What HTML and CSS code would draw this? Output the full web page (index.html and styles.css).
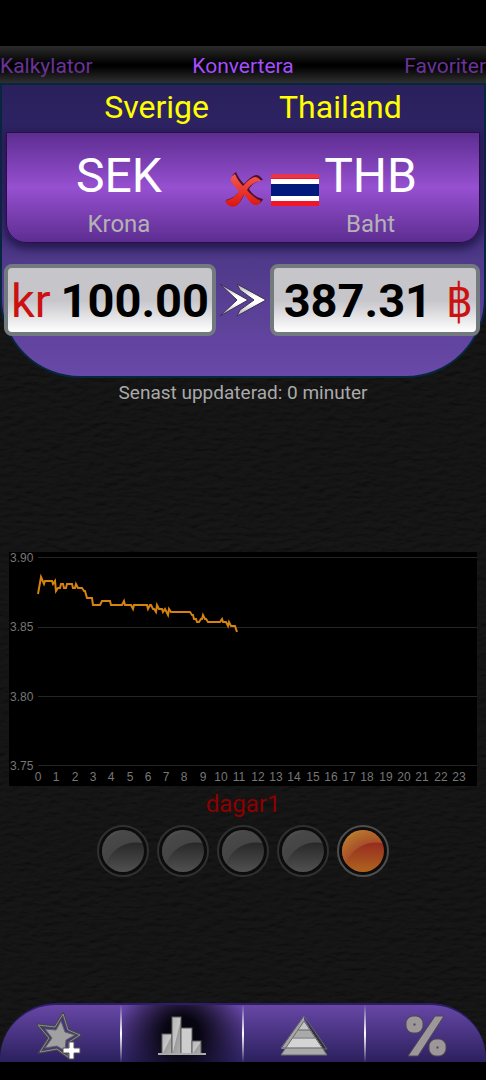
FILE: index.html
```
<!DOCTYPE html>
<html lang="sv">
  <head>
    <meta charset="UTF-8" />
    <meta name="viewport" content="width=device-width, initial-scale=1" />
    <title>Konvertera</title>
    <link rel="stylesheet" href="styles.css">
  </head>
  <body>
    <svg class="leather" aria-hidden="true">
      <filter id="leather" x="0" y="0" width="100%" height="100%">
        <feTurbulence type="fractalNoise" baseFrequency="0.08 0.2" numOctaves="3" seed="4" />
        <feDiffuseLighting lighting-color="#fff" surfaceScale="2">
          <feDistantLight azimuth="250" elevation="50" />
        </feDiffuseLighting>
      </filter>
      <rect width="100%" height="100%" filter="url(#leather)" />
    </svg>

    <div class="statusbar"></div>

    <nav class="tabs">
      <a href="#kalkylator">Kalkylator</a>
      <a href="#konvertera" class="active">Konvertera</a>
      <a href="#favoriter">Favoriter</a>
    </nav>

    <main>
      <section class="panel">
        <div class="countries">
          <span>Sverige</span>
          <span>Thailand</span>
        </div>

        <div class="card">
          <button class="currency">
            <span class="code">SEK</span>
            <span class="name">Krona</span>
          </button>
          <div class="flags">
            <svg width="40" height="36" viewBox="0 0 40 36">
              <defs>
                <linearGradient id="red" x1="0" y1="0" x2="0" y2="1">
                  <stop offset="0" stop-color="#f45a50" />
                  <stop offset="1" stop-color="#dc1410" />
                </linearGradient>
              </defs>
              <path d="M11 1C8 3 6 6 7 9C9 13 12 16 15 19C12 24 8 27 1 29C3 33 7 36 12 34C16 31 17 27 20 23C24 26 26 32 31 33C34 34 37 31 38 28C32 27 27 23 24 18C27 13 32 9 38 9C36 6 34 4 31 4C26 5 22 10 19 13C16 10 13 6 11 1Z" fill="#4a1030" transform="translate(1 -1)" />
              <path d="M11 2C8 4 6 6 7 9C9 13 12 16 15 19C12 24 8 27 1 29C3 33 7 36 12 34C16 31 17 27 20 23C24 26 26 32 31 33C34 34 36 31 37 29C32 27 27 23 23 18C26 13 31 9 37 9C35 6 33 5 31 5C26 6 22 11 19 14C16 11 13 7 11 2Z" fill="url(#red)" />
            </svg>
            <svg width="48" height="32" viewBox="0 0 48 32">
              <rect width="48" height="32" fill="#f31427" />
              <rect width="48" height="4" fill="#ea3548" />
              <rect y="5" width="48" height="22" fill="#fff" />
              <rect y="10" width="48" height="12" fill="#00197d" />
            </svg>
          </div>
          <button class="currency">
            <span class="code">THB</span>
            <span class="name">Baht</span>
          </button>
        </div>

        <div class="amounts">
          <div class="field">
            <label for="from">kr</label>
            <input type="text" id="from" name="from" value="100.00" />
          </div>
          <svg class="arrows" width="46" height="34" viewBox="0 0 46 34">
            <defs>
              <linearGradient id="silver" x1="0" y1="0" x2="0" y2="1">
                <stop offset="0" stop-color="#aaa" />
                <stop offset="0.4" stop-color="#fff" />
                <stop offset="0.6" stop-color="#fff" />
                <stop offset="1" stop-color="#aaa" />
              </linearGradient>
            </defs>
            <g fill="url(#silver)" stroke="#3d3154">
              <path d="M0 1L28 17L0 33L17 17Z" />
              <path d="M17 1L46 17L17 33L20 27L34 17L20 7Z" />
            </g>
          </svg>
          <div class="field to">
            <input type="text" id="to" name="to" value="387.31" />
            <label for="to">฿</label>
          </div>
        </div>
      </section>

      <p class="updated">Senast uppdaterad: 0 minuter</p>

      <svg class="chart" viewBox="0 0 468 234">
        <rect width="468" height="234" />
        <path class="grid" d="M29 5.5H468M29 75.5H468M29 144.5H468M29 213.5H468" />
        <path class="rate" d="M29 42L32 25L35 32L36 29H43L44 32L46 29L47 39L49 36H51L52 32H54L55 36H57L58 32H63L64 36H66L67 32L69 36H73L75 39H76L78 46H83L84 53H91L93 49H101L102 53H113L115 49L116 53H122L124 57L125 53H138L139 57L141 53H142L144 57H145L147 60L148 53L150 57H153L154 60L156 57L159 63L160 57L162 60H181L183 63H184L185 67H187L188 70H190L192 67H193L194 63L196 67H197L199 70H211L213 67L214 70H217L219 74L220 70L222 74H226L228 80" />
        <g class="values">
          <text x="1" y="10">3.90</text>
          <text x="1" y="79">3.85</text>
          <text x="1" y="149">3.80</text>
          <text x="1" y="218">3.75</text>
        </g>
        <g class="hours" id="hours"></g>
      </svg>

      <p class="period">dagar1</p>

      <div class="dots">
        <input type="radio" name="period" aria-label="5 år" />
        <input type="radio" name="period" aria-label="1 år" />
        <input type="radio" name="period" aria-label="1 månad" />
        <input type="radio" name="period" aria-label="1 vecka" />
        <input type="radio" name="period" aria-label="1 dag" checked />
      </div>
    </main>

    <nav class="toolbar">
      <a href="#spara" aria-label="Spara favorit">
        <svg width="46" height="48" viewBox="0 0 46 48">
          <path d="M26 2L31 18L43 23L32 30L31 45L20 37L3 40L12 26L1 13L18 15Z" fill="#47348a" stroke="#45454d" stroke-width="3" />
          <path d="M26 2L31 18L43 23L32 30L31 45L20 37L3 40L12 26L1 13L18 15Z" fill="none" stroke="#8d8d90" />
          <path d="M24 9L28 20L38 23L29 28L28 39L20 34L8 36L15 26L8 17L19 18Z" fill="#a1a1a1" stroke="#606067" />
          <path d="M32 30H37V36H43V41H37V47H32V41H26V36H32Z" fill="#fff" stroke="#555" />
        </svg>
      </a>
      <a href="#diagram" class="active" aria-label="Diagram">
        <svg width="48" height="42" viewBox="0 0 48 42">
          <defs>
            <linearGradient id="bar" x1="0" y1="0" x2="1" y2="1">
              <stop offset="0" stop-color="#b4b4b4" />
              <stop offset="0.5" stop-color="#c6c6c6" />
              <stop offset="0.55" stop-color="#9d9d9d" />
              <stop offset="1" stop-color="#b0b0b0" />
            </linearGradient>
          </defs>
          <g fill="url(#bar)" stroke="#5c5c5c">
            <rect x="4" y="19" width="10" height="20" />
            <rect x="14" y="2" width="9" height="37" />
            <rect x="23" y="13" width="11" height="26" fill="#cdcdcd" />
            <rect x="34" y="26" width="9" height="13" />
          </g>
          <path d="M0 39H48" stroke="#aaa" stroke-width="2" />
        </svg>
      </a>
      <a href="#pyramid" aria-label="Pyramid">
        <svg width="48" height="42" viewBox="0 0 48 42">
          <path d="M24 1L48 36H45L48 41H44Z" fill="#33333c" />
          <path d="M24 1L1 34H6L24 6Z" fill="#a5a5a5" />
          <path d="M24 5L47 40H1Z" fill="#c4c4c4" />
          <path d="M19 15H30L35 22H13Z" fill="#a9a9a9" />
          <path d="M13 23H36L42 32H6Z" fill="#d4d4d4" />
          <path d="M6 33H42L47 40H1Z" fill="#aaa" />
          <path d="M24 1L47 34H43M24 6L1 40H47L24 6ZM18 15H30M13 23H35M1 33H42M24 1L1 33" fill="none" stroke="#66666b" />
        </svg>
      </a>
      <a href="#procent" aria-label="Procent">
        <svg width="42" height="42" viewBox="0 0 42 42">
          <path d="M30 1H39L13 41H3Z" fill="#9d9799" stroke="#4d4650" />
          <g fill="none">
            <rect x="5" y="5" width="9" height="9" rx="3" stroke="#4d4650" stroke-width="9" />
            <rect x="5" y="5" width="9" height="9" rx="3" stroke="#9d9799" stroke-width="7" />
            <rect x="28" y="28" width="9" height="9" rx="3" stroke="#4d4650" stroke-width="9" />
            <rect x="28" y="28" width="9" height="9" rx="3" stroke="#9d9799" stroke-width="7" />
          </g>
        </svg>
      </a>
    </nav>
    <div class="homebar"></div>

    <script>
      const hours = document.getElementById("hours");

      for (let h = 0; h < 24; h++) {
        const text = document.createElementNS("http://www.w3.org/2000/svg", "text");
        text.setAttribute("x", Math.round(29 + h * 18.3));
        text.setAttribute("y", 229);
        text.textContent = h;
        hours.appendChild(text);
      }
    </script>
  </body>
</html>
```
FILE: styles.css
```
* {
  box-sizing: border-box;
}

body {
  margin: 0;
  min-height: 100vh;
  display: flex;
  flex-direction: column;
  position: relative;
  background-color: #030303;
  font-family: Roboto, "Noto Sans", sans-serif;
}

a {
  text-decoration: none;
}

p {
  margin: 0;
  text-align: center;
}

button {
  padding: 0;
  border: none;
  background: none;
  font-family: inherit;
  cursor: pointer;
}

.leather {
  position: absolute;
  top: 0;
  left: 0;
  width: 100%;
  height: 100%;
  z-index: -1;
  opacity: 0.08;
}

.statusbar {
  height: 46px;
  background-color: #000;
}

.homebar {
  height: 18px;
  background-color: #000;
}

.tabs {
  display: flex;
  height: 37px;
  line-height: 40px;
  font-size: 21px;
  background: linear-gradient(#2b2b2b, #000 50%, #000 55%, #303030);
}

.tabs a {
  flex: 1;
  color: #693399;
}

.tabs .active {
  text-align: center;
  color: #a64dff;
}

.tabs a:last-child {
  text-align: right;
}

main {
  flex: 1;
}

.panel {
  height: 295px;
  border: 2px solid #07273f;
  border-radius: 0 0 80px 80px;
  background: linear-gradient(#2a205c, #35296f 40%, #4f3989 60%, #6949a8);
}

.countries {
  display: flex;
  justify-content: center;
  gap: 70px;
  padding-left: 20px;
  height: 47px;
  line-height: 44px;
  font-size: 32px;
  color: #ffff00;
}

.card {
  display: flex;
  height: 111px;
  margin: 0 4px;
  padding: 0 62px 0 69px;
  border: 1px solid #2b0d4b;
  border-radius: 0 0 20px 20px;
  background: linear-gradient(#5d2d91, #9650d0 50%, #5d2d91);
  box-shadow: 0 3px 8px 3px #241a50;
}

.currency {
  display: flex;
  flex-direction: column;
  align-items: center;
}

.code {
  height: 76px;
  line-height: 86px;
  font-size: 48px;
  color: #fff;
}

.name {
  line-height: 30px;
  font-size: 24px;
  color: #b3b3b3;
}

.flags {
  display: flex;
  gap: 7px;
  align-items: center;
  height: 114px;
  margin-left: auto;
  margin-right: 5px;
}

.amounts {
  display: flex;
  align-items: center;
  justify-content: space-between;
  margin-top: 21px;
  padding: 0 4px 0 2px;
}

.field {
  display: flex;
  align-items: center;
  width: 212px;
  height: 72px;
  padding: 0 3px;
  border: 4px solid #737a7f;
  border-radius: 8px;
  background: linear-gradient(#c5c5ca, #c5c5ca 50%, #fff);
}

.field label {
  font-size: 47px;
  color: #cc1111;
}

.field input {
  flex: 1;
  min-width: 0;
  padding: 0;
  border: none;
  background: none;
  font-family: inherit;
  font-size: 47px;
  font-weight: bold;
  text-align: right;
  color: #000;
}

.field.to {
  gap: 14px;
  width: 210px;
}

.to label {
  font-family: "DejaVu Sans Condensed", "Noto Sans", sans-serif;
}

.updated {
  line-height: 30px;
  font-size: 19px;
  color: #aaa;
}

.chart {
  display: block;
  width: calc(100% - 18px);
  margin: 144px 9px 0;
  font-family: "Liberation Sans", sans-serif;
  font-size: 12px;
}

.chart text {
  fill: #777;
}

.grid {
  stroke: #262626;
}

.rate {
  fill: none;
  stroke: #d6820f;
  stroke-width: 2;
}

.hours {
  text-anchor: middle;
}

.period {
  line-height: 36px;
  font-size: 24px;
  color: #8b0000;
}

.dots {
  display: flex;
  justify-content: center;
  gap: 8px;
}

.dots input {
  appearance: none;
  width: 52px;
  height: 52px;
  margin: 3px 0 0;
  padding: 3px;
  border: 2px solid #303030;
  border-radius: 50%;
  background:
    radial-gradient(circle at 34px 44px, #0000 31px, #454545 32px, #484848 44px, #686868 56px) content-box,
    linear-gradient(#282828 30%, #505050) content-box,
    #0c0c0c;
  cursor: pointer;
}

.dots input:checked {
  border-color: #4d4d4d;
  background:
    radial-gradient(circle at 34px 44px, #0000 31px, #a8502a 32px, #b56f2c 44px, #c8a850 56px) content-box,
    linear-gradient(#962c20 30%, #b0641e) content-box,
    #0c0c0c;
}

.toolbar {
  display: flex;
  height: 59px;
  overflow: hidden;
  border-top: 2px solid #2b1d66;
  border-radius: 56px 56px 0 0;
  background: linear-gradient(#6747a6, #2b205e);
}

.toolbar a {
  flex: 1;
  display: flex;
  align-items: center;
  justify-content: center;
  padding-top: 4px;
}

.toolbar a + a {
  border-left: 2px solid;
  border-image: linear-gradient(#fff0, #fff 50%, #fff0) 1;
}

.toolbar .active {
  background: radial-gradient(circle, #07050f 25%, #07050f00 95%);
}
```
